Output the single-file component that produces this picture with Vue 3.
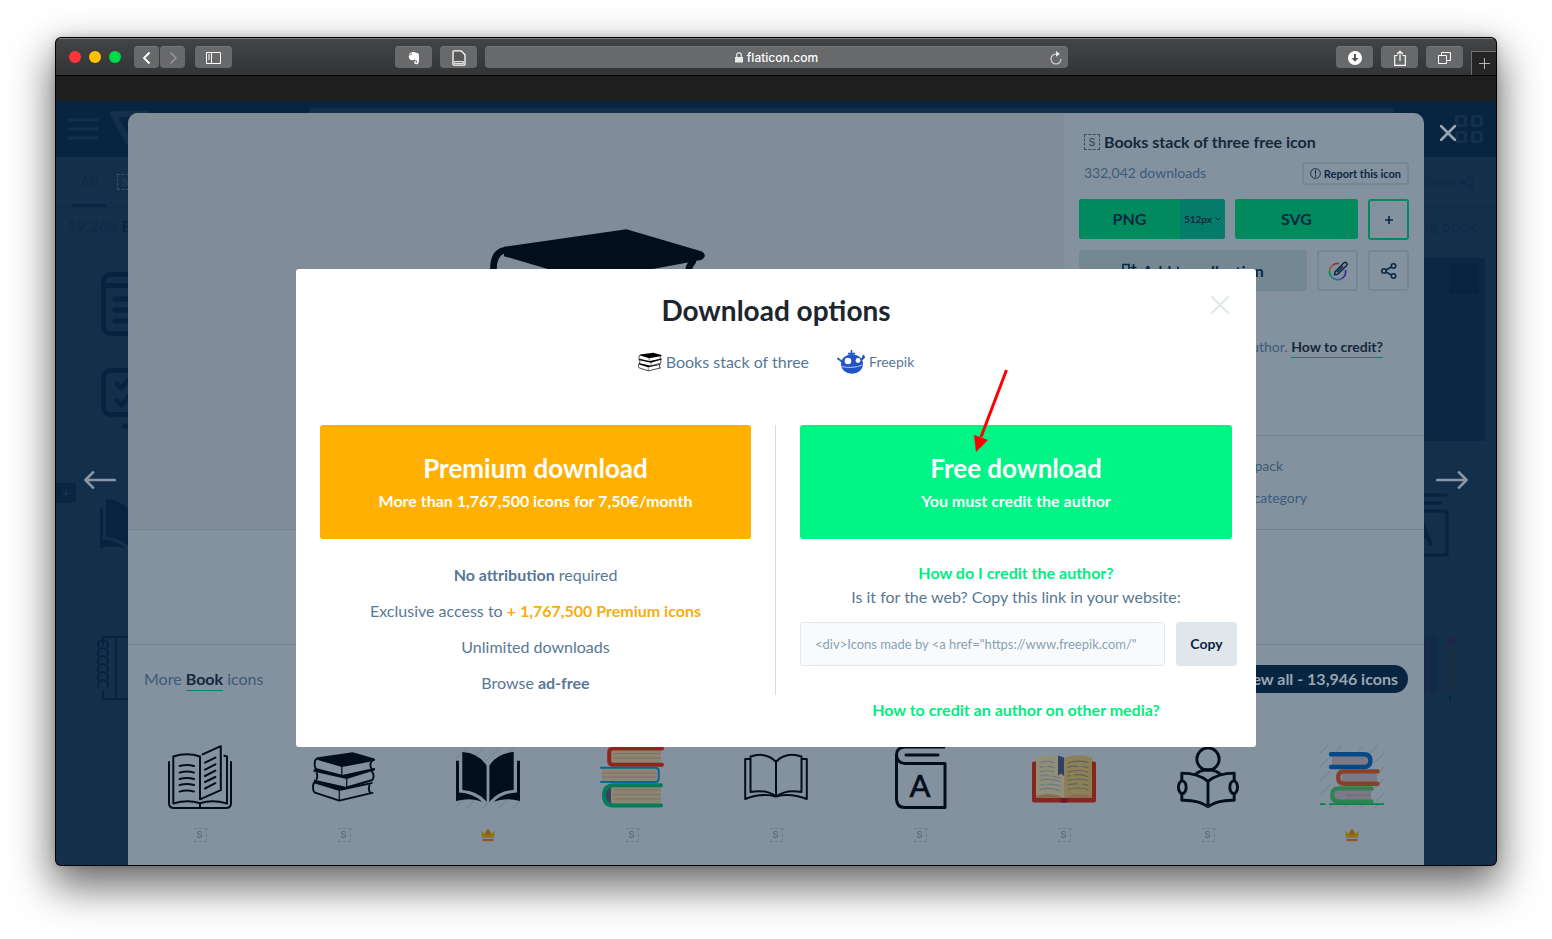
<script setup>
const related = [
  { id: 'pages', premium: false },
  { id: 'stack', premium: false },
  { id: 'solid', premium: true },
  { id: 'colorstack', premium: false },
  { id: 'open', premium: false },
  { id: 'dictionary', premium: false },
  { id: 'colorbook', premium: false },
  { id: 'reader', premium: false },
  { id: 'tower', premium: true },
]
const embedCode = '<div>Icons made by <a href="https://www.freepik.com/"'
</script>

<template>
  <svg class="symbols" aria-hidden="true">
    <symbol id="stack" viewBox="0 0 64 64">
      <path fill="currentColor" d="M5.8 12.2 40.7 7.2 62.3 13.6Q64 14.8 62 16L59 16.6 29.8 22 5.7 14.9ZM2 24 30.7 30.2 63 23.4V25.2L34.7 34 1.2 26.6ZM1.6 34.6 34.7 42 61 37 60 39 27.3 46 3 38.6Z" />
      <path fill="none" stroke="currentColor" stroke-width="1.9" stroke-linejoin="round" stroke-linecap="round" d="M6 13.2Q2.6 13.7 2.7 19 2.7 23.4 4.6 24.2L30.7 31 62 24M59.6 16.5Q57.3 19 59.4 23.6M4.6 28.2Q6 31 4.6 34M60 26.4Q63 31 60.4 35L34.7 42.5M3.6 36.6Q.9 37.6 1 42 1 46.6 3 47.6L27.3 55.6 60.4 47.8M57.4 40.4Q56 44 58 47.4" />
      <path stroke="currentColor" stroke-width="1.2" d="M29.8 21.5V31M34.7 33.5V42.5M27.3 45.5V55.5" />
    </symbol>
    <symbol id="pages" viewBox="0 0 64 64">
      <g fill="none" stroke="currentColor" stroke-width="2" stroke-linecap="round" stroke-linejoin="round">
        <path d="M1 17V58Q1 63 6 63H58Q63 63 63 58V17" />
        <path d="M32 54.3V11.5Q19 7 5.3 11.5V58.5Q20 54 32 58.3 44 54 59 58.5V11.5L56.4 10.7M34.6 9.4 52.8 1.2V45.2L32 54.3M32 58.3V62" />
        <path d="M11.6 21Q19 19 26 21M11.6 27.6Q19 25.6 26 27.6M11.6 34Q19 32 26 34M11.6 40Q19 38 26 40M11.6 46.6Q19 44.6 26 46.6M37 17.6 47.4 12.6M37 24.6 47.4 19.4M37 31 47.4 25.6M37 37 47.4 32M37 43.5 47.4 38.2" />
      </g>
    </symbol>
    <symbol id="solid" viewBox="0 0 64 64">
      <path stroke="#1d262d" stroke-opacity=".16" d="M0 14 14 0M16 14 30 0M30 16 46 0M44 16 60 0M0 62 8 54M10 64 20 54M26 64 36 54M42 64 52 54M56 64 64 56" />
      <path fill="currentColor" d="M6.3 7Q23 8 30.6 20.7V56.7Q21 45.5 6.3 45ZM57.7 7Q41 8 33.4 20.7V56.7Q43 45.5 57.7 45ZM0 15.7H3V47.4Q17 48 26.3 56.7 15 52 0 56ZM64 15.7H61V47.4Q47 48 37.7 56.7 49 52 64 56Z" />
    </symbol>
    <symbol id="colorstack" viewBox="0 0 64 64">
      <path fill="#8b8673" d="M11 4H61V18H11ZM2 24H57V36H2ZM11 42H61V59H11Z" />
      <path stroke="#856f62" stroke-width="1.2" d="M13 8.5H61M13 13H61M2 28H56M2 32H56M13 45H61M13 49.5H61M13 54H61" />
      <path fill="#3a4262" d="M11 42V59Q5 57 5 50.500 5 44 11 42Z" />
      <g fill="none" stroke-linecap="round">
        <path stroke="#8e261e" stroke-width="4" d="M62 3.500H13Q9.200 3.500 9.200 7.500V16Q9.200 19.700 13 19.700H62" />
        <path stroke="#07658f" stroke-width="2" d="M1 22.700H55Q58.700 22.700 58.700 26V33.500Q58.700 37 55 37H1" />
        <path stroke="#037c5a" stroke-width="4" d="M61 40.200H14Q4 40.200 4 50.400 4 60.500 14 60.500H61" />
      </g>
    </symbol>
    <symbol id="open" viewBox="0 0 64 64">
      <path fill="none" stroke="currentColor" stroke-width="2" stroke-linejoin="round" d="M32 16.700Q22 6.500 6.500 11.500V47Q22 44 32 51.500 42 44 57.500 47V11.500Q42 6.500 32 16.700V51.500M6.500 14H1.200V54Q18 47.500 32 51.500 46 47.500 62.800 54V14H57.500" />
    </symbol>
    <symbol id="dictionary" viewBox="0 0 64 64">
      <path fill="none" stroke="currentColor" stroke-width="3" stroke-linejoin="round" stroke-linecap="round" d="M56 2H17Q8.500 2.500 8.500 10V54Q8.500 62.500 17 62.500H57V18.500H17Q9 18 8.500 10M18 10H50" />
      <text x="32" y="52" text-anchor="middle" font-family="Lato, sans-serif" font-size="31" font-weight="400" fill="currentColor" stroke="currentColor" stroke-width=".6">A</text>
    </symbol>
    <symbol id="colorbook" viewBox="0 0 64 64">
      <rect y="16.500" width="64" height="41" rx="2" fill="#85261f" />
      <path fill="#918f77" d="M4 12.500Q18 8 32 13V53H4Z" />
      <path fill="#8d8054" d="M60 12.500Q46 8 32 13V53H60Z" />
      <path fill="#8c6c57" d="M4 51Q20 46 32 53H4ZM60 51Q44 46 32 53H60Z" />
      <path fill="#323f66" d="M26 10.500 32 12.500V31L29 28.500 26 30.500Z" />
      <path fill="#74142b" d="M28.500 53H35.500V57.500H28.500Z" />
      <g fill="none" stroke-width="1.200" stroke-linecap="round">
        <path stroke="#67778b" d="M8 18Q14 15 22 17.500M8 22.500Q10 21 12 22M15 21.500Q19 21 22 22.500M8 27Q14 24.500 22 27M8 31Q14 29 17 31M20 31 28 33M8 35.500Q18 33 28 36.500M8 40Q10 39 12 40M15 39.500Q20 38.500 28 41M8 44.500Q18 42 28 45.500" />
        <path stroke="#59616a" d="M36 18Q46 14.500 56 17.500M36 22.500Q40 20.500 46 21.500M50 21.500 56 22.500M36 27Q46 24 56 27M36 31 38 30.500M42 30Q49 29 56 31.500M36 35.500Q46 32.500 56 35.500M36 40Q40 38.500 46 39M50 39 56 40M36 44.500Q46 41.500 56 44.500" />
      </g>
    </symbol>
    <symbol id="reader" viewBox="0 0 64 66">
      <g fill="none" stroke="currentColor" stroke-width="3" stroke-linejoin="round">
        <circle cx="32" cy="14.500" r="11.500" />
        <path d="M18 31Q24 25.500 32 25.500 40 25.500 46 31M5 37V29Q22 29 32 37.500 42 29 59 29V37M5 50V57Q22 56.500 32 63.500 42 56.500 59 57V50M32 37.500V63.500" />
        <ellipse cx="5.500" cy="43.500" rx="4" ry="6.500" />
        <ellipse cx="58.500" cy="43.500" rx="4" ry="6.500" />
      </g>
    </symbol>
    <symbol id="tower" viewBox="0 0 64 64">
      <path stroke="#1d262d" stroke-opacity=".16" d="M0 8 8 0M0 22 22 0M0 36 10 26M0 50 12 38M38 6 44 0M50 8 58 0M54 18 64 8M58 28 64 22M48 50 64 34M56 56 64 48M8 64 12 60M24 64 28 60M40 64 44 60M54 64 60 58" />
      <path fill="#7c7986" d="M12 11H48V21H12ZM22 28H57V38H22ZM15 45H51V55H15Z" />
      <path stroke="#6a6673" d="M26 50H50" />
      <g fill="none" stroke-width="4.400" stroke-linecap="round">
        <path stroke="#064a85" d="M11 9.200H44Q50.400 9.200 50.400 15.500 50.400 22 44 22H11" />
        <path stroke="#8a4129" d="M57.500 26.400H24Q18.200 26.400 18.200 32.500 18.200 38.700 24 38.700H57.500" />
        <path stroke="#2e8350" d="M51.500 43.400H19Q12.200 43.400 12.200 50 12.200 56.600 19 56.600H51.500" />
      </g>
      <path stroke="#078745" stroke-width="1.800" d="M0 59.200H5.500M9 59.200H64" />
    </symbol>
    <symbol id="share" viewBox="0 0 16 16">
      <g fill="none" stroke="currentColor" stroke-width="1.600">
        <circle cx="3" cy="8" r="2.200" /><circle cx="12.500" cy="3" r="2.200" /><circle cx="12.500" cy="13" r="2.200" />
        <path d="M5 7 10.500 4M5 9 10.500 12" />
      </g>
    </symbol>
    <symbol id="crown" viewBox="0 0 14 14">
      <path fill="#8c7527" d="M0 3 3.500 5.500 7 .5 10.500 5.500 14 3 12.800 10H1.200Z" />
      <path fill="#94591f" d="M7 .5 10 6 7 7.500 4 6ZM1.300 11H12.700V13.300H1.300Z" />
    </symbol>
  </svg>

  <div class="desktop">
    <div class="window">
      <header class="toolbar">
        <div class="lights"><i class="red"></i><i class="amber"></i><i class="lime"></i></div>
        <div class="history">
          <button type="button" class="chip small" aria-label="Back"><svg width="10" height="14" viewBox="0 0 10 14"><path d="M7.500 1.500 2 7 7.500 12.500" fill="none" stroke="#fff" stroke-width="1.800" /></svg></button>
          <button type="button" class="chip small" aria-label="Forward"><svg width="10" height="14" viewBox="0 0 10 14"><path d="M2.500 1.500 8 7 2.500 12.500" fill="none" stroke="#98989a" stroke-width="1.500" /></svg></button>
        </div>
        <button type="button" class="chip" aria-label="Sidebar"><svg width="15" height="12" viewBox="0 0 15 12"><path d="M.5.500H14.500V11.500H.5ZM5.500.500V11.500M2 3H4M2 5H4M2 7H4" fill="none" stroke="#fff" /></svg></button>
        <div class="address-group">
          <button type="button" class="chip" aria-label="Evernote"><svg width="12" height="14" viewBox="0 0 12 14"><path fill="#fff" d="M3.500 1 6.500 1Q7.500 2 10 2.300 11 2.600 11 5 11.300 9 10.500 12 10 13.300 8 13.200 6 13 6.200 11.200 6.500 9.800 8.300 10V11Q7.300 11 7.400 11.700 7.600 12.200 8.600 12 9.300 11.500 9 9.600 7 9.600 6.500 8.500 5.500 9.600 3 9 1 8.500.700 5.500L1 4.200H3.500ZM.8 3.400 2.800 1.200V3.400Z" /></svg></button>
          <button type="button" class="chip" aria-label="Reader"><svg width="14" height="16" viewBox="0 0 14 16"><path d="M1 2Q1 .8 2.200.8H9L13 4.800V14Q13 15.200 11.800 15.200H2.200Q1 15.200 1 14Z" fill="#59595b" stroke="#fff" stroke-width="1.300" /><path d="M2.500 11.500H11.500V13.500H2.500Z" fill="#777" stroke="#fff" stroke-width=".8" /></svg></button>
          <div class="address">
            <span class="host">
              <svg width="8" height="11" viewBox="0 0 8 11"><path d="M0 5H8V10.500H0Z" fill="#e8e8e8" /><path d="M1.700 5V3Q1.700.800 4 .800 6.300.800 6.300 3V5" fill="none" stroke="#e8e8e8" stroke-width="1.200" /></svg>
              flaticon.com
            </span>
            <button type="button" class="reload" aria-label="Reload"><svg width="12" height="14" viewBox="0 0 12 14"><path d="M6 3A5 5 0 1 0 11 8" fill="none" stroke="#e0e0e0" stroke-width="1.100" /><path d="M6 0 10 3 6 5.800Z" fill="#e8e8e8" /></svg></button>
          </div>
        </div>
        <div class="actions">
          <button type="button" class="chip" aria-label="Downloads"><svg width="14" height="14" viewBox="0 0 14 14"><circle cx="7" cy="7" r="7" fill="#fff" /><path d="M6 3H8V7H10.500L7 10.800 3.500 7H6Z" fill="#555" /></svg></button>
          <button type="button" class="chip" aria-label="Share page"><svg width="12" height="16" viewBox="0 0 12 16"><path d="M3.500 5.500H.7V15.300H11.300V5.500H8.500M6 11V1.200M3 4 6 1.200 9 4" fill="none" stroke="#fff" stroke-width="1.200" /></svg></button>
          <button type="button" class="chip" aria-label="Tabs"><svg width="13" height="12" viewBox="0 0 13 12"><path d="M.5 3.500H8.500V11.500H.5ZM3.500 3V.500H12.500V8.500H9" fill="none" stroke="#fff" /></svg></button>
          <button type="button" class="newtab" aria-label="New tab"><svg width="11" height="11" viewBox="0 0 11 11"><path d="M5.500 0V11M0 5.500H11" stroke="#b4b4b4" /></svg></button>
        </div>
      </header>
      <div class="tabstrip"></div>

      <div class="viewport">
        <div class="page">
          <div class="page-head">
            <svg width="30" height="22" viewBox="0 0 30 22"><path d="M0 2H30M0 11H30M0 20H30" stroke="#142f4a" stroke-width="3" /></svg>
            <svg width="40" height="36" viewBox="0 0 40 36"><path d="M3 3H37L20 33Z" fill="none" stroke="#142f4a" stroke-width="6" stroke-linejoin="round" /></svg>
            <div class="search"></div>
            <svg width="30" height="30" viewBox="0 0 30 30"><path d="M2.500 2.500H11.500V11.500H2.500ZM18.500 2.500H27.500V11.500H18.500ZM2.500 18.500H11.500V27.500H2.500ZM18.500 18.500H27.500V27.500H18.500Z" fill="none" stroke="#142f4a" stroke-width="3" stroke-linejoin="round" /></svg>
          </div>
          <div class="page-tabs">
            <a href="#all" class="tab active">All</a>
            <a href="#selection" class="tab"><span class="badge large">S</span></a>
            <a href="#share" class="tab end">Share <svg width="14" height="14"><use href="#share" /></svg></a>
          </div>
          <div class="page-title"><span>19,268 <b>Book</b></span><span>Reading book</span></div>
          <div class="page-grid">
            <div class="column">
              <svg width="64" height="64" viewBox="0 0 64 64"><g fill="none" stroke="#07233f" stroke-width="5" stroke-linecap="round"><rect x="2.500" y="2.500" width="59" height="59" rx="7" /><path d="M3 13.500H61M14 27H50M14 38H50M14 49H50" /></g></svg>
              <svg width="64" height="64" viewBox="0 0 64 64"><g fill="none" stroke="#07233f" stroke-width="5" stroke-linecap="round" stroke-linejoin="round"><rect x="2.500" y="2.500" width="59" height="44" rx="7" /><path d="M16 16 20.500 20 28 11M16 33 20.500 37 28 28M23 58H41" /></g></svg>
              <svg width="74" height="64" viewBox="0 0 64 64"><path fill="#07233f" d="M6 7Q23 8 31 20.700V56.700Q21 45.500 6 45ZM0 15.700H3V47.400Q17 48 26 56.700 15 52 0 56Z" /></svg>
              <svg width="70" height="64" viewBox="0 0 70 64"><g fill="none" stroke="#07233f" stroke-width="2"><path d="M6 10V1H69V63H6V54M19 1V63" /><path v-for="n in 6" :key="n" :d="`M2 ${n * 8 + 4}A5 5 0 1 1 10 ${n * 8 + 4}`" /></g></svg>
            </div>
            <div class="column right">
              <div class="promo"><span class="promo-badge"></span></div>
              <svg width="64" height="64" viewBox="0 0 64 64"><path d="M10 2H60M10 10H55M8 18H61V62H8Z" fill="none" stroke="#07233f" stroke-width="3" stroke-linecap="round" /><text x="35" y="52" font-family="Lato, sans-serif" font-size="34" font-weight="400" fill="#07233f" stroke="#07233f" text-anchor="middle">A</text></svg>
              <svg width="64" height="64" viewBox="0 0 64 64"><path fill="#102a4c" d="M0 0H43Q47 0 47 4V52Q47 56 43 56H0Z" /><path fill="#1d2849" d="M35 0H39V56H35ZM55 0H64V8H55Z" /><path fill="#1a2c42" d="M55 12H64V53H55Z" /><path fill="#0b2442" d="M58 58H60V64H58Z" /></svg>
            </div>
          </div>
          <span class="page-add">+</span>
        </div>

        <button type="button" class="nav close" aria-label="Close"><svg width="16" height="16" viewBox="0 0 16 16"><path d="M1 1 15 15M15 1 1 15" stroke="#99a4af" stroke-width="2.600" stroke-linecap="round" /></svg></button>
        <button type="button" class="nav prev" aria-label="Previous"><svg width="32" height="18" viewBox="0 0 32 18"><path d="M30.700 9H1.500M9 1.400 1.500 9 9 16.600" fill="none" stroke="#8996a3" stroke-width="2.700" stroke-linecap="round" stroke-linejoin="round" /></svg></button>
        <button type="button" class="nav next" aria-label="Next"><svg width="32" height="18" viewBox="0 0 32 18"><path d="M1.300 9H30.500M23 1.400 30.500 9 23 16.600" fill="none" stroke="#8996a3" stroke-width="2.700" stroke-linecap="round" stroke-linejoin="round" /></svg></button>

        <article class="detail">
          <div class="detail-top">
            <div class="preview"><svg width="224" height="224"><use href="#stack" /></svg></div>
            <aside class="side">
              <div class="side-main">
                <h2><span class="badge large">S</span>Books stack of three free icon</h2>
                <div class="meta"><span>332,042 downloads</span><button type="button" class="report"><svg width="11" height="11" viewBox="0 0 12 12"><circle cx="6" cy="6" r="5.300" fill="none" stroke="currentColor" /><path d="M6 2.500V7M6 8V9.500" stroke="currentColor" stroke-width="1.200" /></svg>Report this icon</button></div>
                <div class="row">
                  <div class="png"><button type="button" class="format">PNG</button><button type="button" class="size">512px <svg width="6" height="4" viewBox="0 0 6 4"><path d="M.5.500 3 3 5.500.500" fill="none" stroke="currentColor" /></svg></button></div>
                  <button type="button" class="format svg">SVG</button>
                  <button type="button" class="square plus" aria-label="More formats"><svg width="8" height="8" viewBox="0 0 8 8"><path d="M4 0V8M0 4H8" stroke="currentColor" stroke-width="1.600" /></svg></button>
                </div>
                <div class="row">
                  <button type="button" class="collect"><svg width="15" height="15" viewBox="0 0 15 15"><path d="M1 14V1.500H7V14M11.500 1V8M8.500 4.500H14.500" fill="none" stroke="currentColor" stroke-width="1.700" /></svg>Add to collection</button>
                  <button type="button" class="square" aria-label="Edit icon"><svg width="20" height="20" viewBox="0 0 20 20"><g fill="none" stroke-width="1.700"><path stroke="#8d3144" d="M5 4A8 8 0 0 1 11 2.500" /><path stroke="#8d672e" d="M1.500 10A8 8 0 0 1 5 4" /><path stroke="#078b68" d="M4 16.500A8 8 0 0 1 1.500 10" /><path stroke="#256ba5" d="M14.500 17A8 8 0 0 1 4 16.500" /><path stroke="#3d2d91" d="M17.500 9A8 8 0 0 1 14.500 17" /></g><path d="M6.500 13.800 7 10.800 16 1.800Q17.200.800 18.500 2 19.800 3.200 18.600 4.500L9.700 13.300ZM9 11.300 15 5.300" fill="none" stroke="#0c2843" stroke-width="1.500" stroke-linejoin="round" /></svg></button>
                  <button type="button" class="square" aria-label="Share icon"><svg width="16" height="16"><use href="#share" /></svg></button>
                </div>
                <p class="credit">Attribute to the author. <a href="#credit">How to credit?</a></p>
              </div>
              <div class="side-links"><a href="#pack" class="pack">More from this pack</a><a href="#category" class="category">More from this category</a></div>
            </aside>
          </div>
          <div class="detail-ad"></div>
          <section class="more">
            <div class="more-head"><span>More <a href="#book">Book</a> icons</span><a href="#all-icons" class="view-all">View all - 13,946 icons</a></div>
            <ul class="icons">
              <li v-for="item in related" :key="item.id">
                <svg width="64" height="64"><use :href="`#${item.id}`" /></svg>
                <svg v-if="item.premium" width="14" height="14"><use href="#crown" /></svg>
                <span v-else class="badge">S</span>
              </li>
            </ul>
          </section>
        </article>

        <section class="dialog" role="dialog" aria-labelledby="dialog-title">
          <button type="button" class="dismiss" aria-label="Close dialog"><svg width="18" height="18" viewBox="0 0 18 18"><path d="M1 1 17 17M17 1 1 17" stroke="#dfe7ea" stroke-width="2" stroke-linecap="round" /></svg></button>
          <h1 id="dialog-title">Download options</h1>
          <div class="source">
            <span class="name"><svg width="24" height="24"><use href="#stack" /></svg>Books stack of three</span>
            <a href="#freepik" class="author"><svg width="28" height="24" viewBox="0 0 28 24"><ellipse cx="15" cy="14" rx="11" ry="9.800" fill="#2254c5" /><path d="M14.500 5V.500M11.500 3.600H17.500M5 11.500.8 8.500M24.500 10 26.500 5.500M25 9.500 27.500 7" stroke="#2254c5" stroke-width="1.600" stroke-linecap="round" /><circle cx="11" cy="11" r="3.300" fill="#fff" /><circle cx="21" cy="10.500" r="2.400" fill="#fff" /><path d="M4.500 16.500Q15 19 25.500 15" fill="none" stroke="#b5c7f0" /></svg>Freepik</a>
          </div>
          <div class="options">
            <div class="option premium">
              <button type="button" class="download"><span class="big">Premium download</span><span class="sub">More than 1,767,500 icons for 7,50€/month</span></button>
              <ul>
                <li><b>No attribution</b> required</li>
                <li>Exclusive access to <b class="gold">+ 1,767,500 Premium icons</b></li>
                <li>Unlimited downloads</li>
                <li>Browse <b>ad-free</b></li>
              </ul>
            </div>
            <div class="option free">
              <button type="button" class="download"><span class="big">Free download</span><span class="sub">You must credit the author</span></button>
              <a href="#how" class="how">How do I credit the author?</a>
              <label for="embed">Is it for the web? Copy this link in your website:</label>
              <div class="copy-row"><input id="embed" type="text" readonly :value="embedCode" /><button type="button">Copy</button></div>
              <a href="#media" class="media">How to credit an author on other media?</a>
            </div>
          </div>
          <svg class="pointer" width="34" height="84" viewBox="0 0 34 84"><path d="M32.500 1 7 68" stroke="#f00" stroke-width="3" /><path d="M2 83 0 66 14 71Z" fill="#f00" /></svg>
        </section>
      </div>
    </div>
  </div>
</template>

<style>
body { background: #fff; }
</style>

<style scoped>
* { box-sizing: border-box; }
.symbols { position: absolute; width: 0; height: 0; }
svg { display: block; flex: none; }
button { border: 0; padding: 0; background: none; font: inherit; color: inherit; cursor: pointer; display: flex; align-items: center; justify-content: center; }
a { color: inherit; text-decoration: none; }
h1, h2, p, ul { margin: 0; padding: 0; list-style: none; }
.desktop { min-height: 100vh; padding: 38px 56px 74px; display: flex; font-family: Lato, "Open Sans", sans-serif; font-size: 16px; line-height: 24px; }
.window { flex: 1; display: flex; flex-direction: column; border-radius: 5px; overflow: hidden; box-shadow: 0 0 0 1px #000, 0 18px 42px 4px rgba(0, 0, 0, .58), 0 0 10px rgba(0, 0, 0, .2); background: #1e1e1e; }

.toolbar { height: 38px; display: grid; grid-template-columns: auto auto auto 1fr auto; align-items: center; background: linear-gradient(#434446, #333436); border-top: 1px solid #7c7d7e; border-bottom: 1px solid #000; padding-left: 13px; }
.lights { display: flex; gap: 8px; margin-right: 13px; }
.lights i { width: 12px; height: 12px; border-radius: 50%; }
.red { background: #ff3436; }
.amber { background: #ffc100; }
.lime { background: #00d948; }
.history { display: flex; gap: 1px; margin-right: 10px; }
.chip { width: 37px; height: 22px; border-radius: 4px; background: #68696b; border-top: 1px solid #77787a; }
.chip.small { width: 25px; }
.address-group { justify-self: center; width: 673px; display: flex; align-items: center; gap: 8px; margin-left: 2px; margin-right: 107px; }
.address { flex: 1; height: 22px; display: flex; align-items: center; border-radius: 4px; background: #68696b; border-top: 1px solid #77787a; padding: 0 6px 0 18px; }
.host { flex: 1; display: flex; align-items: center; justify-content: center; gap: 4px; font: 500 12px/20px Inter, sans-serif; color: #fff; }
.actions { display: flex; align-items: center; gap: 8px; height: 100%; }
.newtab { width: 25px; height: 24px; align-self: flex-end; background: #252526; border-top: 1px solid #707172; border-left: 1px solid #707172; }
.tabstrip { height: 25px; background: #1e1e1e; }

.viewport { flex: 1; position: relative; overflow: hidden; background: #142f4a; padding: 12px 72px 0; display: flex; }
.page { position: absolute; inset: 0; color: #0e2a47; }
.page-head { height: 56px; display: flex; align-items: center; padding: 0 12px; gap: 12px; background: #072541; }
.search { flex: 1; align-self: flex-start; height: 40px; margin: 7px 48px 0 147px; background: #142f4a; border-radius: 4px; }
.page-tabs { height: 51px; display: flex; padding: 0 16px; gap: 2px; border-bottom: 1px solid #112b47; }
.page-tabs .badge { border-color: #0e2a47; color: #0e2a47; }
.tab { width: 34px; display: flex; align-items: center; justify-content: center; }
.tab.active { border-bottom: 3px solid #0a2644; }
.tab.end { width: auto; margin-left: auto; margin-right: 6px; gap: 5px; font-size: 14px; }
.page-title { height: 52px; padding: 6px 19px 0 11px; display: flex; justify-content: space-between; align-items: flex-start; }
.page-title b { color: #0a2542; }
.page-grid { display: flex; justify-content: space-between; padding-left: 45px; }
.column { display: flex; flex-direction: column; padding-top: 12px; }
.column svg:nth-child(2) { margin-top: 32px; }
.column svg:nth-child(3) { margin: 60px 0 0 -6px; }
.column svg:nth-child(4) { margin: 80px 0 0 -4px; }
.column.right { padding: 0 11px 0 0; align-items: flex-end; margin-top: -2px; }
.column.right svg { margin-right: 35px; }
.column.right svg:nth-child(2) { margin-top: 52px; }
.column.right svg:nth-child(3) { margin: 80px 30px 0 0; }
.promo { width: 160px; height: 183px; background: #0b2745; padding: 6px; display: flex; justify-content: flex-end; }
.promo-badge { width: 30px; height: 30px; background: #082341; }
.page-add { position: absolute; left: 0; top: 382px; width: 20px; height: 20px; line-height: 18px; text-align: center; border-radius: 0 3px 3px 0; background: #082541; color: #173653; }

.nav { position: absolute; z-index: 1; }
.nav.close { top: 24px; right: 40px; }
.nav.prev { top: 370px; left: 28px; }
.nav.next { top: 370px; right: 28px; }

.detail { position: relative; flex: 1; display: flex; flex-direction: column; border-radius: 10px 10px 0 0; overflow: hidden; background: #84919e; color: #3b5c7a; }
.detail-top { display: flex; height: 417px; border-bottom: 1px solid #74848f; }
.preview { flex: 1; display: flex; align-items: center; justify-content: center; padding-bottom: 10px; background: #808d99; color: #020f1b; }
.side { width: 360px; display: flex; flex-direction: column; }
.side-main { height: 323px; padding: 16px 15px 0; border-bottom: 1px solid #74848f; }
h2 { display: flex; align-items: center; gap: 4px; margin-left: 5px; font-size: 16px; line-height: 26px; font-weight: 700; color: #15283a; }
.badge { width: 13px; height: 14px; display: inline-flex; align-items: center; justify-content: center; border: 1px dashed #6a7985; border-left: 0; font: 400 9px/12px Inter, sans-serif; color: #566878; }
.badge.large { width: 16px; height: 16px; border-left: 1px dashed; border-color: #3b4c5b; color: #2b3d4d; font-size: 10px; }
.meta { display: flex; align-items: center; justify-content: space-between; margin: 7px 0 14px 5px; font-size: 14px; line-height: 23px; }
.meta span { line-height: 20px; padding-bottom: 2px; }
.report { height: 23px; padding: 0 6px; gap: 3px; border: 2px solid #758894; border-radius: 3px; font-size: 11px; font-weight: 700; color: #0c2843; }
.row { display: flex; align-items: flex-start; gap: 10px; margin-bottom: 10px; color: #0b2843; }
.png { width: 146px; display: flex; border-radius: 3px; overflow: hidden; background: #028a5f; }
.format { flex: 1; height: 40px; font-size: 16px; font-weight: 700; background: #028a5f; }
.format.svg { flex: none; width: 123px; border-radius: 3px; }
.size { width: 45px; gap: 3px; font-size: 10px; font-weight: 700; background: #047c69; }
.square { width: 41px; height: 41px; border: 2px solid #758894; border-radius: 3px; }
.plus { border-color: #028a5f; }
.collect { flex: 1; height: 41px; gap: 5px; border-radius: 3px; background: #748894; font-weight: 700; }
.credit { width: 304px; margin-top: 45px; text-align: right; font-size: 14px; line-height: 22px; }
.credit a { display: inline-block; font-weight: 700; line-height: 20px; color: #15283a; border-bottom: 1px solid #028a5f; }
.side-links { display: flex; flex-direction: column; align-items: flex-start; gap: 8px; padding: 18px 15px 0; font-size: 14px; }
.side-links a { text-align: right; width: 228px; }
.side-links .pack { width: 204px; }
.detail-ad { height: 115px; border-bottom: 1px solid #74848f; }
.more { padding-top: 20px; }
.more-head { display: flex; align-items: center; justify-content: space-between; height: 28px; padding: 0 16px; margin-bottom: 52px; }
.more-head span a { display: inline-block; line-height: 22px; font-weight: 700; color: #15283a; border-bottom: 1px solid #028a5f; }
.view-all { padding: 2px 10px; border-radius: 14px; background: #072541; color: #9aa5b0; font-weight: 700; }
.icons { display: grid; grid-template-columns: repeat(9, 1fr); color: #020f1b; }
.icons li { display: flex; flex-direction: column; align-items: center; gap: 19px; }

.dialog { position: absolute; z-index: 2; top: 168px; left: 0; right: 0; width: 960px; max-width: 100%; margin: 0 auto; padding: 24px; height: 478px; border-radius: 3px; background: #fff; color: #587895; text-align: center; }
.dismiss { position: absolute; top: 27px; right: 27px; }
h1 { font-size: 28px; line-height: 34px; font-weight: 700; color: #1d262d; }
.source { display: flex; align-items: center; justify-content: center; gap: 28px; height: 24px; margin: 23px 0 51px; }
.source span, .source a { display: flex; align-items: center; gap: 4px; }
.name svg { color: #000; }
.source .author { font-size: 14px; }
.options { display: grid; grid-template-columns: 1fr 1fr; }
.option { display: flex; flex-direction: column; }
.premium { height: 270px; padding-right: 24px; border-right: 1px solid #d3dbe0; }
.free { padding-left: 24px; }
.download { flex: none; width: 100%; height: 114px; flex-direction: column; gap: 5px; border-radius: 3px; color: #fff; font-weight: 700; background: #ffb000; }
.free .download { background: #00f586; }
.big { font-size: 26px; line-height: 32px; }
.sub { line-height: 24px; }
.premium ul { padding-top: 18px; line-height: 36px; }
.gold { color: #f9ad0c; }
.how, .media { color: #00ee80; font-weight: 700; }
.how { margin-top: 22px; }
.copy-row { display: flex; gap: 11px; margin: 13px -5px 32px 0; height: 44px; }
.copy-row input { flex: 1; min-width: 0; padding: 0 14px; border: 1px solid #dfe8ec; border-radius: 3px; background: #f8fafc; font: 400 13px/20px Lato, sans-serif; color: #87a2b7; }
.copy-row button { width: 61px; border-radius: 3px; background: #e0e7ea; color: #0b2340; font-size: 14px; font-weight: 700; }
.pointer { position: absolute; left: 678px; top: 100px; }
</style>
